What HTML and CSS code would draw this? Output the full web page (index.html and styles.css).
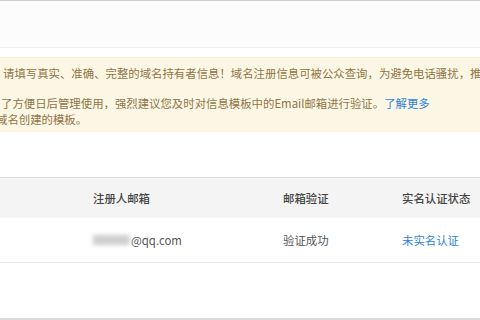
FILE: index.html
```html
<!DOCTYPE html>
<html lang="zh-CN">
<head>
<meta charset="utf-8">
<link rel="stylesheet" href="styles.css">
</head>
<body>
<div class="topbar"></div>
<div class="notice">
  <div class="line l1">请填写真实、准确、完整的域名持有者信息！域名注册信息可被公众查询，为避免电话骚扰，推荐使用隐私保护服务。</div>
  <div class="line l2">了方便日后管理使用，强烈建议您及时对信息模板中的Email邮箱进行验证。<a class="link">了解更多</a></div>
  <div class="line l3">域名创建的模板。</div>
</div>
<div class="table">
  <div class="row head">
    <div class="cell"></div>
    <div class="cell">注册人邮箱</div>
    <div class="cell">邮箱验证</div>
    <div class="cell">实名认证状态</div>
  </div>
  <div class="row body">
    <div class="cell"></div>
    <div class="cell"><span class="blur"></span>@qq.com</div>
    <div class="cell">验证成功</div>
    <div class="cell"><a class="link">未实名认证</a></div>
  </div>
</div>
<div class="bottom"></div>
</body>
</html>
```

FILE: styles.css
```css
html, body {
  margin: 0;
  padding: 0;
  background: #ffffff;
  width: 480px;
  height: 320px;
  overflow: hidden;
  font-family: "Noto Sans CJK SC", "Liberation Sans", sans-serif;
  font-size: 11.4px;
}

.topbar {
  height: 46px;
  border-top: 1px solid #d0d0d0;
  border-bottom: 1px solid #efefef;
  background: #fcfcfc;
}

.notice {
  margin-top: 9px;
  border-top: 1px solid #fbeed9;
  border-bottom: 1px solid #fbf0dc;
  background: #fcf7e4;
  color: #917548;
  padding: 7px 0 4px 0;
  overflow: hidden;
}

.line {
  height: 16px;
  line-height: 16px;
  white-space: nowrap;
}

.l1 {
  margin-left: 3px;
  margin-bottom: 14px;
}

.l2 {
  margin-left: 1px;
}

.l3 {
  margin-left: -4px;
}

.link {
  color: #2f83d8;
  text-decoration: none;
}

.table {
  margin-top: 45px;
  border-top: 1px solid #dedede;
  border-bottom: 1px solid #ececec;
}

.row {
  display: grid;
  grid-template-columns: 93px 190px 119px 1fr;
  align-items: center;
}

.head {
  height: 40px;
  background: #f4f4f4;
  color: #444444;
  font-weight: 500;
}

.body {
  height: 44px;
  background: #ffffff;
  color: #555555;
}

.cell {
  white-space: nowrap;
  display: flex;
  align-items: center;
}

.blur {
  display: inline-block;
  width: 37px;
  height: 10px;
  background: #cfcfcf;
  filter: blur(2px);
  margin-right: 1px;
}

.bottom {
  margin-top: 55px;
  height: 2px;
  background: #dadada;
}
```
